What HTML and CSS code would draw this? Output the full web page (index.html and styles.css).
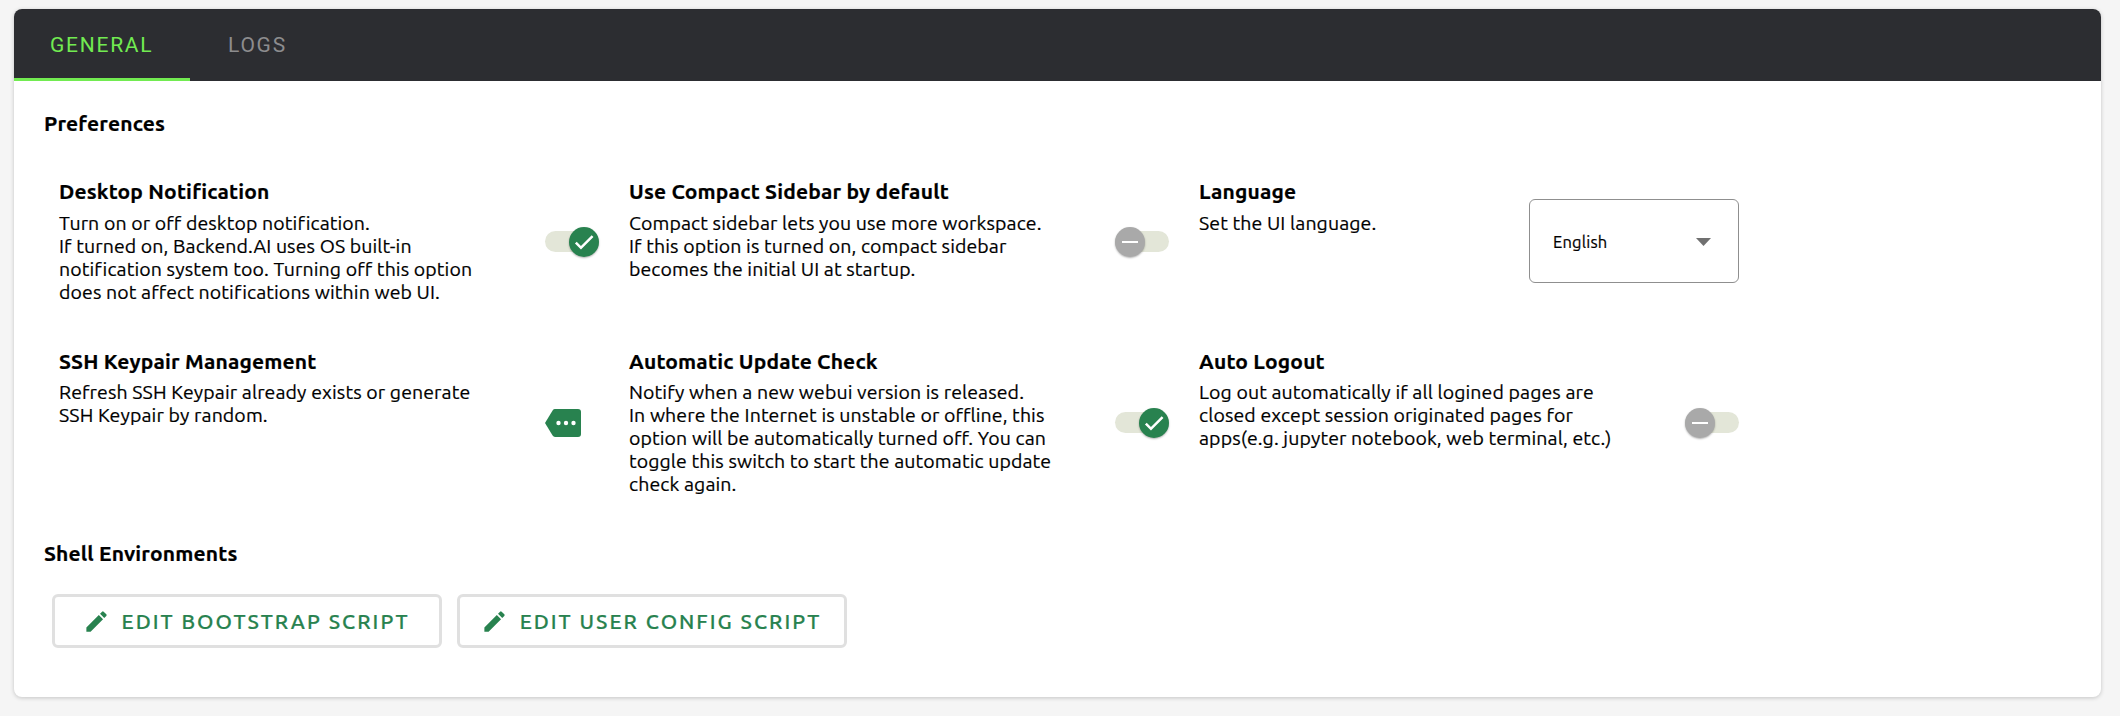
FILE: index.html
```
<!DOCTYPE html>
<html lang="en">
<head>
<meta charset="utf-8">
<title>Settings</title>
<link rel="stylesheet" href="styles.css">
</head>
<body>
<main class="card">
  <nav class="tabs">
    <a class="tab active">GENERAL</a>
    <a class="tab">LOGS</a>
  </nav>
  <div class="content">
    <h3 class="section-title">Preferences</h3>
    <div class="grid">
      <section class="item first-row">
        <div class="text">
          <h4>Desktop Notification</h4>
          <p>Turn on or off desktop notification.<br>If turned on, Backend.AI uses OS built-in<br>notification system too. Turning off this option<br>does not affect notifications within web UI.</p>
        </div>
        <div class="switch on"><span class="knob"><svg viewBox="0 0 24 24"><path d="M19.69 5.23L8.96 15.96l-4.23-4.23L2.96 13.5l6 6L21.46 7z"/></svg></span></div>
      </section>
      <section class="item first-row">
        <div class="text">
          <h4>Use Compact Sidebar by default</h4>
          <p>Compact sidebar lets you use more workspace.<br>If this option is turned on, compact sidebar<br>becomes the initial UI at startup.</p>
        </div>
        <div class="switch"><span class="knob"><svg viewBox="0 0 24 24"><path d="M20 13H4v-2h16v2z"/></svg></span></div>
      </section>
      <section class="item first-row">
        <div class="text">
          <h4>Language</h4>
          <p>Set the UI language.</p>
        </div>
        <div class="select"><span>English</span><svg viewBox="0 0 15 8"><path d="M0 0h15L7.5 8z"/></svg></div>
      </section>
      <section class="item">
        <div class="text">
          <h4>SSH Keypair Management</h4>
          <p>Refresh SSH Keypair already exists or generate<br>SSH Keypair by random.</p>
        </div>
        <div class="more"><svg viewBox="0 0 36 28"><path class="tag" d="M10 0h23a3 3 0 0 1 3 3v22a3 3 0 0 1-3 3H10q-1.500 0-2.400-1.400L0 14 7.600 1.400Q8.500 0 10 0z"/><circle cx="13.500" cy="14" r="2.200"/><circle cx="21" cy="14" r="2.200"/><circle cx="28.500" cy="14" r="2.200"/></svg></div>
      </section>
      <section class="item">
        <div class="text">
          <h4>Automatic Update Check</h4>
          <p>Notify when a new webui version is released.<br>In where the Internet is unstable or offline, this<br>option will be automatically turned off. You can<br>toggle this switch to start the automatic update<br>check again.</p>
        </div>
        <div class="switch on"><span class="knob"><svg viewBox="0 0 24 24"><path d="M19.69 5.23L8.96 15.96l-4.23-4.23L2.96 13.5l6 6L21.46 7z"/></svg></span></div>
      </section>
      <section class="item">
        <div class="text">
          <h4>Auto Logout</h4>
          <p>Log out automatically if all logined pages are<br>closed except session originated pages for<br>apps(e.g. jupyter notebook, web terminal, etc.)</p>
        </div>
        <div class="switch"><span class="knob"><svg viewBox="0 0 24 24"><path d="M20 13H4v-2h16v2z"/></svg></span></div>
      </section>
    </div>
    <h3 class="section-title shell">Shell Environments</h3>
    <div class="buttons">
      <button class="btn"><svg viewBox="0 0 24 24"><path d="M3 17.250V21h3.750L17.810 9.940l-3.750-3.750L3 17.250zM20.710 7.040a.996.996 0 0 0 0-1.410l-2.340-2.340a.996.996 0 0 0-1.410 0l-1.830 1.830 3.750 3.750 1.830-1.830z"/></svg>EDIT BOOTSTRAP SCRIPT</button>
      <button class="btn"><svg viewBox="0 0 24 24"><path d="M3 17.250V21h3.750L17.810 9.940l-3.750-3.750L3 17.250zM20.710 7.040a.996.996 0 0 0 0-1.410l-2.340-2.340a.996.996 0 0 0-1.410 0l-1.830 1.830 3.750 3.750 1.830-1.830z"/></svg>EDIT USER CONFIG SCRIPT</button>
    </div>
  </div>
</main>
</body>
</html>
```
FILE: styles.css
```
* { box-sizing: border-box; }
body {
  margin: 0;
  padding: 9px 19px 19px 14px;
  height: 716px;
  background: #f5f5f5;
  color: #000;
  font-family: Ubuntu, "Open Sans", "Noto Sans", sans-serif;
}
.card {
  height: 688px;
  background: #fff;
  border-radius: 8px;
  overflow: hidden;
  box-shadow: 0 1px 4px rgba(0, 0, 0, .2);
}
.tabs {
  display: flex;
  height: 72px;
  background: #2c2d31;
  font: 21px/66px Roboto, sans-serif;
  letter-spacing: 1.75px;
}
.tab {
  padding: 3px 36px 0 38px;
  color: #8c8c8e;
}
.tab.active {
  width: 176px;
  padding-left: 36px;
  color: #72eb51;
  border-bottom: 3px solid #72eb51;
}
.content { padding: 29px 30px 0; }
h3, h4, p { margin: 0; white-space: nowrap; }
.section-title, h4 {
  font-size: 21px;
  line-height: 27px;
  font-weight: 700;
  letter-spacing: .17px;
}
h3, h4, p, .select span, .btn { -webkit-text-stroke: .2px currentColor; }
.grid {
  display: grid;
  grid-template-columns: repeat(3, 570px);
  row-gap: 44px;
  margin: 41px 0 0 15px;
}
.item {
  display: flex;
  width: 540px;
  align-items: center;
  justify-content: space-between;
}
.text { align-self: flex-start; }
.text p {
  margin-top: 6px;
  font-size: 19.5px;
  line-height: 23px;
  letter-spacing: .1px;
}
.first-row .text p { margin-top: 7px; }
.switch {
  display: flex;
  align-items: center;
  width: 54px;
  height: 21px;
  margin-top: 1px;
  border-radius: 11px;
  background: #e3e6d8;
}
.switch.on { justify-content: flex-end; }
.knob {
  display: flex;
  align-items: center;
  justify-content: center;
  width: 30px;
  height: 30px;
  flex: none;
  border-radius: 50%;
  background: #a9a9a9;
  box-shadow: 0 1px 2px rgba(0, 0, 0, .3);
}
.on .knob { background: #28824f; }
.knob svg { width: 24px; height: 24px; fill: #fff; }
.select {
  display: flex;
  align-items: center;
  justify-content: space-between;
  width: 210px;
  height: 84px;
  padding: 1px 27px 0 23px;
  border: 1px solid #8f8f8f;
  border-radius: 6px;
  font-size: 16.5px;
  letter-spacing: .2px;
}
.select svg { width: 15px; height: 8px; fill: #707070; }
.more { width: 54px; height: 28px; margin-top: 1px; }
.more svg { display: block; width: 36px; height: 28px; fill: #fff; }
.more .tag { fill: #28824f; }
.shell { margin-top: 44px; }
.buttons {
  display: flex;
  gap: 15px;
  margin: 27px 0 0 8px;
}
.btn {
  display: flex;
  align-items: center;
  justify-content: center;
  width: 390px;
  height: 54px;
  padding: 0 2px 0 0;
  border: 3px solid #e0e0e0;
  border-radius: 6px;
  background: #fff;
  color: #28824f;
  font: 500 21px/27px Ubuntu, "Noto Sans", sans-serif;
  letter-spacing: 2px;
  white-space: nowrap;
}
.btn svg { width: 27px; height: 27px; margin-right: 12px; fill: currentColor; }
```
